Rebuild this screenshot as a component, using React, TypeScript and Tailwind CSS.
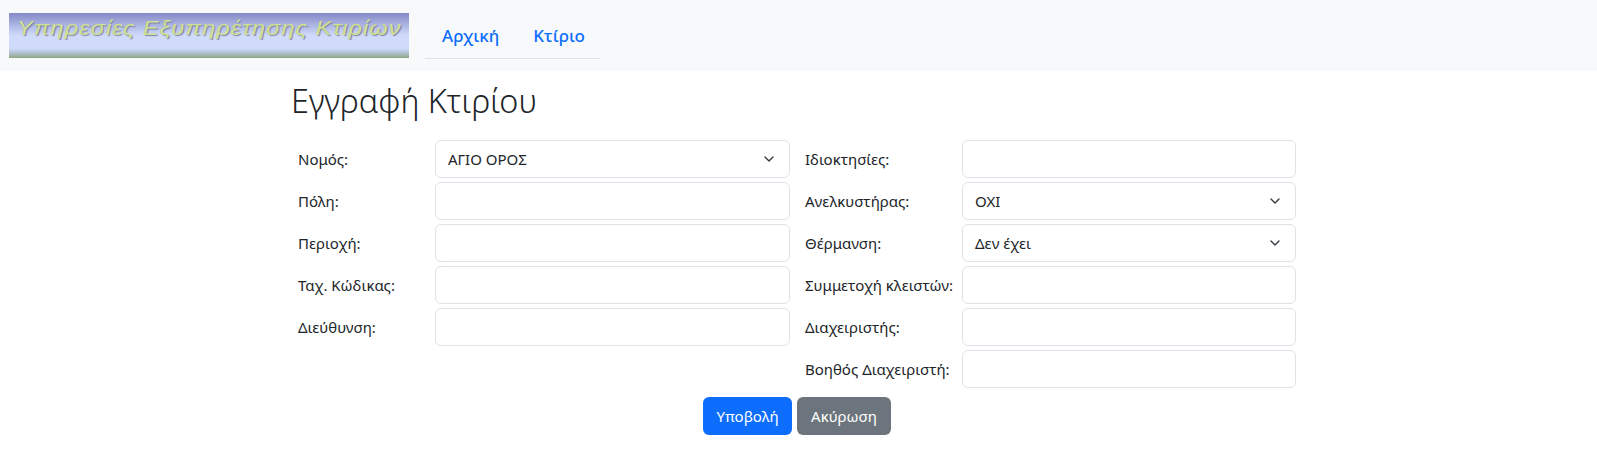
import { ChevronDown } from "lucide-react";

type Field = { label: string; value?: string; select?: boolean };

const leftFields: Field[] = [
  { label: "Νομός:", value: "ΑΓΙΟ ΟΡΟΣ", select: true },
  { label: "Πόλη:" },
  { label: "Περιοχή:" },
  { label: "Ταχ. Κώδικας:" },
  { label: "Διεύθυνση:" },
];

const rightFields: Field[] = [
  { label: "Ιδιοκτησίες:" },
  { label: "Ανελκυστήρας:", value: "ΟΧΙ", select: true },
  { label: "Θέρμανση:", value: "Δεν έχει", select: true },
  { label: "Συμμετοχή κλειστών:" },
  { label: "Διαχειριστής:" },
  { label: "Βοηθός Διαχειριστή:" },
];

function FormRow({ field, labelWidth, inputWidth }: { field: Field; labelWidth: string; inputWidth: string }) {
  return (
    <div className="flex h-[38px] items-center">
      <label className={`${labelWidth} shrink-0 whitespace-nowrap text-[15px] text-[#212529]`}>{field.label}</label>
      {field.select ? (
        <div className={`${inputWidth} flex h-[38px] shrink-0 items-center justify-between rounded-md border border-[#dee2e6] bg-white pl-3 pr-[12px] text-[15px] text-[#212529]`}>
          <span>{field.value}</span>
          <ChevronDown size={16} strokeWidth={2} className="text-[#343a40]" />
        </div>
      ) : (
        <input type="text" className={`${inputWidth} h-[38px] shrink-0 rounded-md border border-[#dee2e6] bg-white px-3`} />
      )}
    </div>
  );
}

export default function App() {
  return (
    <div className="min-h-[475px] bg-white font-['Noto_Sans',sans-serif]">
      <nav className="flex h-[71px] bg-[#f8f9fa] pl-[9px] pt-[13px]">
        <div className="flex h-[45px] w-[400px] items-start overflow-hidden bg-[linear-gradient(#8588c6_0%,#a9b2e2_25%,#d0dbfb_50%,#d0dbfb_78%,#b4c3d4_88%,#8da585_100%)] pl-[8px] pt-[2px]">
          <span className="inline-block origin-left scale-x-[1.15] whitespace-nowrap font-['Liberation_Sans',sans-serif] text-[20.5px] italic leading-[26px] tracking-[0.9px] text-[#cfe08e] [text-shadow:1px_1px_1px_#7b80a6]">
            Υπηρεσίες Εξυπηρέτησης Κτιρίων
          </span>
        </div>
        <ul className="ml-[16px] flex h-[46px] w-[175px] gap-[34px] border-b border-[#dee2e6] pl-[17px] pt-[10px] text-[17px] font-medium text-[#0d6efd]">
          <li>Αρχική</li>
          <li>Κτίριο</li>
        </ul>
      </nav>
      <main className="pl-[291px]">
        <h1 className="mt-[6px] text-[32.4px] font-light leading-[46px] text-[#212529]">Εγγραφή Κτιρίου</h1>
        <div className="mt-[17px] flex">
          <div className="flex flex-col gap-[4px] pl-[7px]">
            {leftFields.map((field) => (
              <FormRow key={field.label} field={field} labelWidth="w-[137px]" inputWidth="w-[355px]" />
            ))}
          </div>
          <div className="ml-[15px] flex flex-col gap-[4px]">
            {rightFields.map((field) => (
              <FormRow key={field.label} field={field} labelWidth="w-[157px]" inputWidth="w-[334px]" />
            ))}
          </div>
        </div>
        <div className="mt-[9px] flex gap-[5px] pl-[412px]">
          <button type="button" className="h-[38px] w-[89px] rounded-md bg-[#0d6efd] text-[15px] text-white">Υποβολή</button>
          <button type="button" className="h-[38px] w-[94px] rounded-md bg-[#6c757d] text-[15px] text-white">Ακύρωση</button>
        </div>
      </main>
    </div>
  );
}
